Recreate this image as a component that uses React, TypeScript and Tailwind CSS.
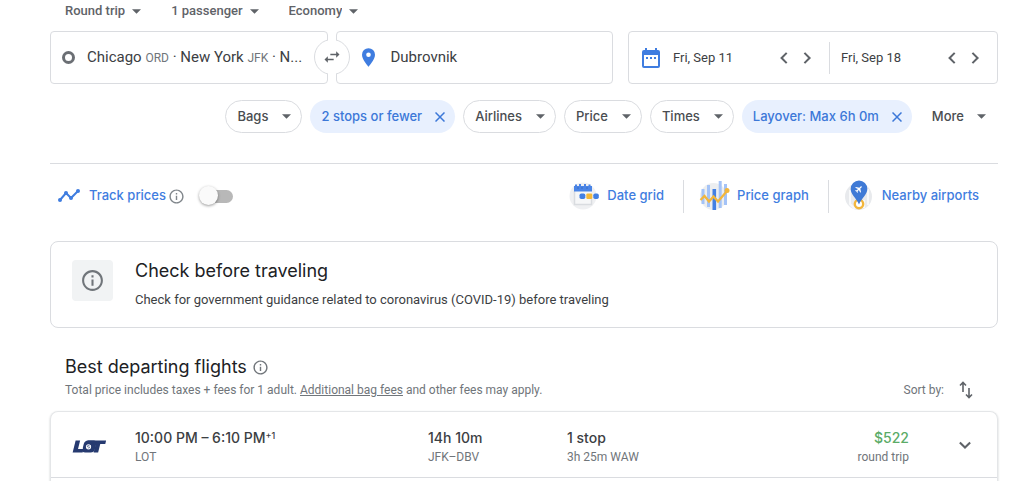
import { useState } from "react";
import type { ReactNode } from "react";

function Caret() {
  return (
    <svg viewBox="0 0 10 5" className="h-[5px] w-[9px] shrink-0 fill-[#5f6368]" aria-hidden="true">
      <path d="M0 0h10L5 5z" />
    </svg>
  );
}

function Cross() {
  return (
    <svg viewBox="0 0 10 10" className="size-[10px] shrink-0 stroke-[#3c78d8]" fill="none" strokeWidth="1.5" aria-hidden="true">
      <path d="M.5.5l9 9M9.5.5l-9 9" />
    </svg>
  );
}

function Info({ className }: { className: string }) {
  return (
    <svg viewBox="0 0 24 24" className={className} fill="currentColor" aria-hidden="true">
      <path d="M11 7h2v2h-2zm0 4h2v6h-2zm1-9C6.48 2 2 6.48 2 12s4.48 10 10 10 10-4.48 10-10S17.52 2 12 2zm0 18c-4.41 0-8-3.59-8-8s3.59-8 8-8 8 3.59 8 8-3.59 8-8 8z" />
    </svg>
  );
}

function Chevron({ direction }: { direction: "left" | "right" | "down" }) {
  const paths = { left: "M9 1L3 7l6 6", right: "M4 1l6 6-6 6", down: "M1 4l6 6 6-6" };
  return (
    <svg viewBox="0 0 14 14" className="size-3 stroke-[#5f6368]" fill="none" strokeWidth="2.4" aria-hidden="true">
      <path d={paths[direction]} />
    </svg>
  );
}

function TripSelect({ label, options }: { label: string; options: string[] }) {
  return (
    <label className="flex items-center gap-[7px]">
      <select aria-label={label} className="field-sizing-content appearance-none bg-transparent text-[13px] font-medium text-[#5f6368] outline-none">
        {options.map((o) => (
          <option key={o}>{o}</option>
        ))}
      </select>
      <Caret />
    </label>
  );
}

function Chip({ children }: { children: ReactNode }) {
  return (
    <button type="button" className="flex h-[33px] items-center gap-[14px] rounded-full border border-[#dadce0] pr-[10px] pl-[11px] whitespace-nowrap">
      {children}
      <Caret />
    </button>
  );
}

function ActiveChip({ children }: { children: ReactNode }) {
  return (
    <button type="button" className="flex h-[33px] items-center gap-[13px] rounded-full bg-[#e8f0fe] pr-[10px] pl-[11px] whitespace-nowrap text-[#3c78d8]">
      {children}
      <Cross />
    </button>
  );
}

function DateField({ label, value }: { label: string; value: string }) {
  return (
    <div className="flex min-w-0 flex-1 items-center">
      <input aria-label={label} defaultValue={value} className="w-full min-w-0 flex-1 text-[13px] text-[#3c4043] outline-none" />
      <div className="flex gap-[10px]">
        <button type="button" aria-label={`${label}: previous day`}>
          <Chevron direction="left" />
        </button>
        <button type="button" aria-label={`${label}: next day`}>
          <Chevron direction="right" />
        </button>
      </div>
    </div>
  );
}

function DateGridIcon() {
  return (
    <svg viewBox="0 0 32 32" className="size-8" aria-hidden="true">
      <circle cx="14" cy="16" r="13.500" fill="#eff0f2" />
      <path d="M5.500 10h17v14.500h-17z" fill="#f6f7f8" />
      <path d="M5.500 11v13.500h17V19" fill="none" stroke="#d9dce0" strokeWidth="1.500" />
      <path d="M5 6h18v5.500H5z" fill="#4a84e6" />
      <path d="M7 7V4.500M11 7V4M16 7V4M20.500 7V4.500" stroke="#4a84e6" strokeWidth="2" />
      <path d="M8.500 8h1M12.500 8h1M17.500 8h1" stroke="#2f66bd" strokeWidth="1.500" />
      <rect x="10.500" y="13.500" width="5.800" height="5.500" rx="1.800" fill="#4380e3" />
      <rect x="17.300" y="13.500" width="6" height="5.500" rx="1.200" fill="#f4b93b" />
      <rect x="24.300" y="13.500" width="5.500" height="5.500" rx="1.800" fill="#4380e3" />
    </svg>
  );
}

function PriceGraphIcon() {
  return (
    <svg viewBox="0 0 32 32" className="size-8" aria-hidden="true">
      <circle cx="14.500" cy="16.500" r="13.500" fill="#eceef0" />
      <g stroke="#a4c3f7" strokeWidth="3">
        <path d="M4 9v15M9.500 5v22M21.200 1v27M26.500 4v21" />
      </g>
      <path d="M15.300 9v21" stroke="#4380e3" strokeWidth="3.600" />
      <path d="M1.500 20l4-4 4.500 5.500 4.500-5 4.500 5L28 11" fill="none" stroke="#f2b63c" strokeWidth="2.200" />
      <circle cx="28" cy="10.500" r="2.500" fill="#f2b63c" />
    </svg>
  );
}

function NearbyIcon() {
  return (
    <svg viewBox="0 0 32 32" className="size-8" aria-hidden="true">
      <circle cx="14.500" cy="16.500" r="13.500" fill="#e8eaed" />
      <path d="M6 10v14l5 5M24 9v16M20 20v8" fill="none" stroke="#f8f9fa" strokeWidth="2" />
      <circle cx="15" cy="24" r="4.200" fill="#fff" stroke="#f2b63c" strokeWidth="2.400" />
      <path d="M15 .5A8.300 8.300 0 0 0 6.700 9C6.700 14.500 12 17.500 15 24.500c3-7 8.300-10 8.300-15.500A8.300 8.300 0 0 0 15 .5z" fill="#3f7ad6" />
      <g transform="translate(15 9) rotate(45) scale(.8)" fill="#fff">
        <path d="M-.8-4.500h1.600v3L4.500 1v1.200L.8 1v2.200l1.200 1v.8L0 4.500-2 5v-.8l1.200-1V1l-3.700 1.200V1l3.700-2.500z" />
      </g>
    </svg>
  );
}

function LotLogo() {
  return (
    <svg viewBox="0 0 34 16" className="h-4 w-[34px]" role="img" aria-label="LOT">
      <g transform="translate(2 0) skewX(-14)" fill="#263a70">
        <path d="M2 1.500h4.500v8.500H12v3.500H2z" />
        <path d="M14 1.500h18.500V5h-5v8.500H23V5h-9z" />
        <rect x="11" y="1.500" width="12.500" height="12" rx="3.500" />
        <path d="M8.300 1v8.200h3" stroke="#fff" strokeWidth=".8" fill="none" />
      </g>
      <circle cx="16.500" cy="7.800" r="2.600" fill="#fff" />
      <circle cx="16.500" cy="7.800" r="1.700" fill="#7785a8" />
      <path d="M15 9l3.500-2.500" stroke="#fff" />
    </svg>
  );
}

const tools = [
  { label: "Date grid", icon: <DateGridIcon /> },
  { label: "Price graph", icon: <PriceGraphIcon /> },
  { label: "Nearby airports", icon: <NearbyIcon /> },
];

export default function App() {
  const [tracking, setTracking] = useState(false);
  return (
    <main className="overflow-hidden bg-white pr-[26px] pl-[50px] font-['Roboto',sans-serif] text-[#3c4043]">
      <div className="flex h-[22px] items-center gap-[30px] pl-[15px]">
        <TripSelect label="Trip type" options={["Round trip", "One way", "Multi-city"]} />
        <TripSelect label="Passengers" options={["1 passenger", "2 passengers"]} />
        <TripSelect label="Cabin" options={["Economy", "Business", "First"]} />
      </div>

      <form className="mt-[9px] grid grid-cols-[563fr_370fr] gap-[15px]">
        <div className="grid min-w-0 grid-cols-[minmax(0,1fr)_8px_minmax(0,1fr)]">
          <button type="button" className="flex h-[53px] min-w-0 items-center gap-3 rounded border border-[#dadce0] pr-5 pl-[11px] text-left text-[15px] whitespace-nowrap">
            <span className="size-[13px] shrink-0 rounded-full border-[3px] border-[#6b6f74]" />
            <span>
              Chicago <span className="text-xs text-[#70757a]">ORD</span> · New York <span className="text-xs text-[#70757a]">JFK</span> · N...
            </span>
          </button>
          <div className="relative">
            <button type="button" aria-label="Swap origin and destination" className="absolute top-2 -left-[14px] size-9 rounded-full border border-[#dadce0] bg-white" />
            <span className="pointer-events-none absolute inset-y-0 left-0 w-2 bg-white" />
            <svg viewBox="0 0 24 24" className="pointer-events-none absolute top-4 -left-[6px] size-5 fill-[#5f6368]" aria-hidden="true">
              <path d="M6.990 11L3 15l3.990 4v-3H14v-2H6.990v-3zM21 9l-3.990-4v3H10v2h7.010v3L21 9z" />
            </svg>
          </div>
          <label className="flex h-[53px] min-w-0 items-center gap-4 rounded border border-[#dadce0] pl-[25px]">
            <svg viewBox="0 0 14 20" className="h-[19px] w-[13px] shrink-0 fill-[#3f7de0]" aria-hidden="true">
              <path fillRule="evenodd" d="M7 0a7 7 0 0 0-7 7c0 5.200 7 13 7 13s7-7.800 7-13a7 7 0 0 0-7-7zm0 9.500a2.500 2.500 0 1 1 0-5 2.500 2.500 0 0 1 0 5z" />
            </svg>
            <input aria-label="Where to" defaultValue="Dubrovnik" className="w-full min-w-0 text-[15px] outline-none" />
          </label>
        </div>
        <div className="flex h-[53px] min-w-0 items-center rounded border border-[#dadce0] pr-4 pl-[13px]">
          <svg viewBox="0 0 18 20" className="mr-[13px] h-5 w-[18px] shrink-0" aria-hidden="true">
            <path fillRule="evenodd" fill="#3f7de0" d="M3 0h2v2h8V0h2v2h1a2 2 0 0 1 2 2v14a2 2 0 0 1-2 2H2a2 2 0 0 1-2-2V4a2 2 0 0 1 2-2h1zM2 7v11h14V7z" />
            <path d="M4 9h2v2H4zM8 9h2v2H8zM12 9h2v2h-2z" fill="#3f7de0" />
          </svg>
          <DateField label="Departure" value="Fri, Sep 11" />
          <span className="mr-[11px] ml-4 h-8 w-px bg-[#dadce0]" />
          <DateField label="Return" value="Fri, Sep 18" />
        </div>
      </form>

      <div className="mt-4 flex justify-end gap-2 pr-3 font-['Inter',sans-serif] text-[13px] font-medium text-[#4a4d51]">
        <Chip>Bags</Chip>
        <ActiveChip>2 stops or fewer</ActiveChip>
        <Chip>Airlines</Chip>
        <Chip>Price</Chip>
        <Chip>Times</Chip>
        <ActiveChip>Layover: Max 6h 0m</ActiveChip>
        <button type="button" className="flex items-center gap-[13px] pl-3">
          More
          <Caret />
        </button>
      </div>

      <hr className="mt-[30px] border-[#dadce0]" />

      <div className="flex h-16 items-center justify-between font-['Inter',sans-serif] text-[13px] font-medium text-[#3f7de0]">
        <div className="flex items-center pl-2">
          <svg viewBox="0 0 22 14" className="mr-[9px] h-[14px] w-[22px]" aria-hidden="true">
            <path d="M2 11l6-7 5 5 7-7" fill="none" stroke="#3f7de0" strokeWidth="2" />
            <g fill="#3f7de0">
              <circle cx="2" cy="11" r="2" />
              <circle cx="8" cy="4" r="2" />
              <circle cx="13" cy="9" r="2" />
              <circle cx="20" cy="2" r="2" />
            </g>
          </svg>
          <label htmlFor="track">Track prices</label>
          <Info className="ml-[2px] size-[17px] text-[#80868b]" />
          <span className="relative ml-[14px] flex h-5 w-[34px] items-center">
            <input
              id="track"
              type="checkbox"
              role="switch"
              checked={tracking}
              onChange={(e) => setTracking(e.target.checked)}
              className="peer ml-1 h-[13px] w-[30px] appearance-none rounded-full bg-[#b8b8b8] checked:bg-[#a8c7fa]"
            />
            <span className="pointer-events-none absolute top-0 left-0 size-[19px] rounded-full bg-[#fafafa] shadow-[0_1px_3px_rgba(0,0,0,0.4)] peer-checked:left-4 peer-checked:bg-[#3f7de0]" />
          </span>
        </div>
        <div className="flex items-center divide-x divide-[#dadce0]">
          {tools.map((t) => (
            <button key={t.label} type="button" className="flex h-[33px] items-center gap-[6px] pr-[19px] pl-[15px]">
              {t.icon}
              {t.label}
            </button>
          ))}
        </div>
      </div>

      <section className="mt-[13px] flex items-start gap-[22px] rounded-lg border border-[#dadce0] px-[21px] pt-[17px] pb-[18px]">
        <span className="mt-px flex size-[41px] shrink-0 items-center justify-center rounded bg-[#f1f3f4]">
          <Info className="size-[25px] text-[#70757a]" />
        </span>
        <div>
          <h2 className="font-['Inter',sans-serif] text-lg leading-6 text-[#202124]">Check before traveling</h2>
          <p className="mt-2 text-[13px] leading-[18px]">Check for government guidance related to coronavirus (COVID-19) before traveling</p>
        </div>
      </section>

      <div className="mt-[27px] flex items-end justify-between pl-[15px]">
        <div>
          <h2 className="flex items-center gap-[5px] font-['Inter',sans-serif] text-lg leading-6 text-[#202124]">
            Best departing flights
            <Info className="size-[17px] text-[#70757a]" />
          </h2>
          <p className="mt-[2px] text-xs leading-[18px] text-[#70757a]">
            Total price includes taxes + fees for 1 adult.{" "}
            <a href="#bags" className="underline">
              Additional bag fees
            </a>{" "}
            and other fees may apply.
          </p>
        </div>
        <button type="button" className="flex items-center gap-[15px] pr-[25px] text-xs leading-[18px] text-[#70757a]">
          Sort by:
          <svg viewBox="0 0 14 18" className="h-[18px] w-[14px]" fill="none" stroke="#5f6368" strokeWidth="1.600" aria-hidden="true">
            <path d="M4 11V2M1 4.500l3-3 3 3M10 7v9M7 13.500l3 3 3-3" />
          </svg>
        </button>
      </div>

      <ul className="mt-3 rounded-t-lg border border-b-0 border-[#e4e6e8] shadow-[0_1px_2px_rgba(60,64,67,0.3)]">
        <li className="flex h-[66px] items-center border-b border-[#dadce0] pr-[26px] pl-[21px]">
          <div className="grid flex-1 grid-cols-[63px_293fr_139fr_342fr] items-center pt-1">
            <LotLogo />
            <div>
              <p className="font-['Inter',sans-serif] text-sm leading-5 font-medium">
                10:00 PM – 6:10 PM<sup className="-top-1 text-[9px]">+1</sup>
              </p>
              <p className="text-xs leading-[18px] text-[#70757a]">LOT</p>
            </div>
            <div>
              <p className="font-['Inter',sans-serif] text-sm leading-5 font-medium">14h 10m</p>
              <p className="text-xs leading-[18px] text-[#70757a]">JFK–DBV</p>
            </div>
            <div className="flex justify-between">
              <div>
                <p className="font-['Inter',sans-serif] text-sm leading-5 font-medium">1 stop</p>
                <p className="text-xs leading-[18px] text-[#70757a]">3h 25m WAW</p>
              </div>
              <div className="text-right">
                <p className="font-['Inter',sans-serif] text-sm leading-5 font-medium text-[#5bab67]">$522</p>
                <p className="text-xs leading-[18px] text-[#70757a]">round trip</p>
              </div>
            </div>
          </div>
          <button type="button" aria-label="Flight details" className="ml-[50px]">
            <Chevron direction="down" />
          </button>
        </li>
        <li className="h-3" />
      </ul>
    </main>
  );
}
